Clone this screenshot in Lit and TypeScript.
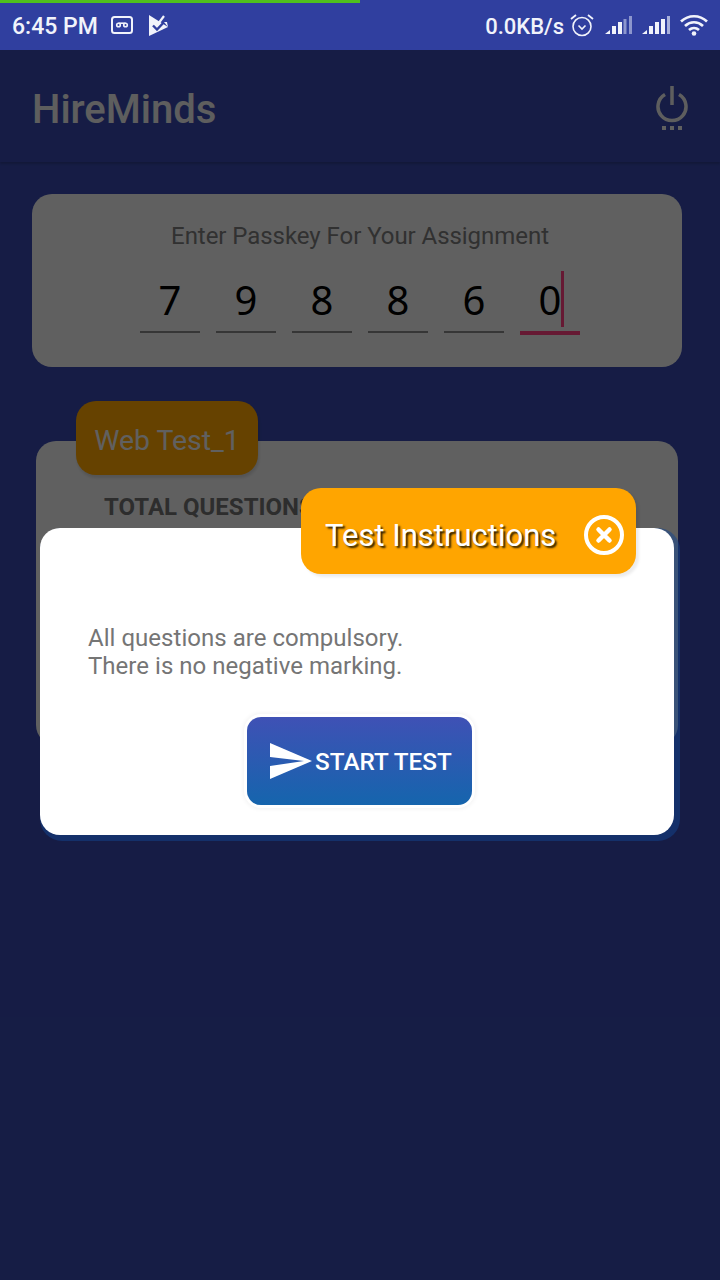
import { LitElement, html, css } from "lit";
import { customElement } from "lit/decorators.js";

const passkey = ["7", "9", "8", "8", "6", "0"];

@customElement("app-root")
export class AppRoot extends LitElement {
  static styles = css`
    :host {
      display: block;
      position: relative;
      height: 1280px;
      overflow: hidden;
      background: #3748ac;
      font-family: Roboto, "Noto Sans", sans-serif;
    }

    .status {
      position: relative;
      z-index: 3;
      height: 50px;
      background: #303f9f;
      color: #f1f3fb;
    }
    .progress {
      width: 360px;
      height: 3px;
      background: #4fc01c;
    }
    .status-row {
      display: flex;
      align-items: center;
      height: 47px;
      padding: 0 12px 3px 12px;
      box-sizing: border-box;
      font-size: 23px;
      font-weight: 500;
    }
    .status-row svg {
      display: block;
      flex: none;
    }
    .time {
      width: 86px;
      padding-top: 2px;
      white-space: nowrap;
    }
    .tape {
      margin-left: 13px;
    }
    .flag {
      margin-left: 16px;
    }
    .speed {
      margin-left: auto;
      padding-top: 2px;
      font-size: 22px;
      white-space: nowrap;
    }
    .alarm {
      margin-left: 6px;
    }
    .sig {
      margin-left: 11px;
    }
    .sig + .sig {
      margin-left: 10px;
    }
    .wifi {
      margin-left: 10px;
    }

    .appbar {
      display: flex;
      align-items: center;
      justify-content: space-between;
      height: 112px;
      padding: 6px 32px 0;
      box-sizing: border-box;
      background: #3748ac;
      box-shadow: 0 2px 2px rgba(0, 0, 0, 0.18);
    }
    .brand {
      font-size: 40px;
      font-weight: 500;
      color: #ececec;
    }

    .main {
      padding: 32px 38px 0 32px;
    }
    .pass-card {
      height: 173px;
      box-sizing: border-box;
      padding: 28px 0 0 6px;
      border-radius: 20px;
      background: #f0f0f0;
      text-align: center;
    }
    .pass-title {
      font-size: 24px;
      line-height: 28px;
      letter-spacing: -0.05px;
      color: #7a7a7a;
    }
    .digits {
      display: flex;
      justify-content: center;
      gap: 16px;
      margin-top: 19px;
    }
    .digit {
      position: relative;
      width: 60px;
      height: 62px;
      border-bottom: 2px solid #888;
      font-family: "Noto Sans", sans-serif;
      font-size: 40px;
      line-height: 62px;
      text-align: center;
      color: #000;
    }
    .digit.active {
      border-bottom: 4px solid #ff4081;
    }
    .caret {
      position: absolute;
      left: 41px;
      top: 2px;
      width: 3px;
      height: 56px;
      background: #ff4081;
    }

    .test {
      margin: 34px 0 0 4px;
      width: 642px;
    }
    .test-tag {
      position: relative;
      display: flex;
      align-items: center;
      justify-content: center;
      width: 182px;
      height: 74px;
      margin: 0 0 -34px 40px;
      padding-top: 5px;
      box-sizing: border-box;
      border-radius: 20px;
      background: #ffa500;
      box-shadow: 1px 3px 3px rgba(0, 0, 0, 0.12);
      font-size: 28.4px;
      color: #f0f0f0;
    }
    .test-card {
      height: 304px;
      box-sizing: border-box;
      padding: 52px 68px 0;
      border-radius: 20px;
      background: #f0f0f0;
      font-size: 24px;
      font-weight: 700;
      color: #707070;
    }

    .scrim {
      position: absolute;
      inset: 0;
      z-index: 1;
      background: rgba(0, 0, 0, 0.6);
    }

    .dialog {
      position: absolute;
      z-index: 2;
      left: 40px;
      top: 528px;
      width: 640px;
      height: 313px;
      border-radius: 22px;
      background: rgba(18, 67, 143, 0.5);
    }
    .dialog-body {
      width: 634px;
      height: 307px;
      box-sizing: border-box;
      padding: 96px 48px 0;
      border-radius: 20px;
      background: #fff;
    }
    .dialog-head {
      position: absolute;
      left: 261px;
      top: -40px;
      display: flex;
      align-items: center;
      justify-content: space-between;
      width: 335px;
      height: 86px;
      padding: 8px 12px 0 24px;
      box-sizing: border-box;
      border-radius: 20px;
      background: #ffa500;
      box-shadow: 3px 3px 3px rgba(0, 0, 0, 0.08);
      font-size: 31px;
      color: #fff;
      text-shadow: 2px 2px 2px #2e2000;
    }
    .dialog-text {
      font-size: 24px;
      line-height: 28px;
      letter-spacing: 0.03px;
      color: #757575;
    }
    .start {
      display: flex;
      align-items: center;
      gap: 3px;
      width: 225px;
      height: 88px;
      margin: 37px 0 0 159px;
      padding: 0 0 0 23px;
      box-sizing: border-box;
      border: none;
      border-radius: 14px;
      background: linear-gradient(#3f51b5, #1565ad);
      box-shadow: 0 0 0 3px #fff, 0 0 4px 4px rgba(0, 0, 0, 0.05);
      color: #fff;
      font-family: inherit;
      font-size: 24.3px;
      font-weight: 500;
    }
  `;

  render() {
    return html`
      <div class="status">
        <div class="progress"></div>
        <div class="status-row">
          <span class="time">6:45 PM</span>
          <svg class="tape" width="22" height="18" viewBox="0 0 22 18">
            <rect x="1" y="1" width="20" height="16" rx="2.500" fill="none" stroke="#f1f3fb" stroke-width="2" />
            <circle cx="7.500" cy="9" r="1.800" fill="none" stroke="#f1f3fb" stroke-width="1.600" />
            <circle cx="14.500" cy="9" r="1.800" fill="none" stroke="#f1f3fb" stroke-width="1.600" />
            <path d="M7.500 7.200h7" stroke="#f1f3fb" stroke-width="1.600" />
          </svg>
          <svg class="flag" width="20" height="21" viewBox="0 0 20 21">
            <path d="M0 0L19 12 0 21z" fill="#f1f3fb" />
            <path d="M4 10.500l4 4L18 4" fill="none" stroke="#303f9f" stroke-width="2.400" />
            <path d="M6 6l3 3 6-8" fill="none" stroke="#f1f3fb" stroke-width="2.200" />
            <path d="M19 12l-4-5 3 0z" fill="#f1f3fb" />
          </svg>
          <span class="speed">0.0KB/s</span>
          <svg class="alarm" width="24" height="24" viewBox="0 0 24 24">
            <circle cx="12" cy="13.500" r="9" fill="none" stroke="#f1f3fb" stroke-width="1.600" />
            <path d="M8.500 12.500l3.500 3.500 3.500-3.500" fill="none" stroke="#f1f3fb" stroke-width="1.600" />
            <path d="M1 6l5-4M23 6l-5-4" stroke="#f1f3fb" stroke-width="1.800" />
          </svg>
          <svg class="sig" width="27" height="20" viewBox="0 0 27 20">
            <path d="M0 19l5-4v4zM7 11h4v8H7zM13 7h4v12h-4z" fill="#f1f3fb" />
            <path d="M18.500 4h3v15h-3zM24 1h3v18h-3z" fill="#8c96cd" />
          </svg>
          <svg class="sig" width="28" height="20" viewBox="0 0 28 20">
            <path d="M0 19l5-4v4zM7 11h4v8H7zM13 7h4v12h-4zM19 4h4v15h-4z" fill="#f1f3fb" />
            <path d="M25 1h3v18h-3z" fill="#a9b1db" />
          </svg>
          <svg class="wifi" width="28" height="22" viewBox="0 0 28 22">
            <g fill="none" stroke="#f1f3fb" stroke-width="2.700">
              <path d="M1 7.500C8.500 .5 19.500 .5 27 7.500" />
              <path d="M5 12c5.500-5 12.500-5 18 0" />
              <path d="M9 16c3-2.700 7-2.700 10 0" />
            </g>
            <circle cx="14" cy="19.500" r="2.300" fill="#f1f3fb" />
          </svg>
        </div>
      </div>

      <header class="appbar">
        <span class="brand">HireMinds</span>
        <svg width="32" height="46" viewBox="0 0 32 46">
          <path d="M9 8.500a14 14 0 1 0 14 0" fill="none" stroke="#ececec" stroke-width="3.500" />
          <path d="M16 0v19" stroke="#ececec" stroke-width="3.500" />
          <path d="M6 40h4v4H6zM14 40h4v4h-4zM22 40h4v4h-4z" fill="#f0f0f0" />
        </svg>
      </header>

      <main class="main">
        <section class="pass-card">
          <div class="pass-title">Enter Passkey For Your Assignment</div>
          <div class="digits">
            ${passkey.map(
              (d, i) => html`
                <div class="digit ${i === passkey.length - 1 ? "active" : ""}">
                  ${d}${i === passkey.length - 1 ? html`<span class="caret"></span>` : ""}
                </div>
              `
            )}
          </div>
        </section>

        <section class="test">
          <div class="test-tag">Web Test_1</div>
          <div class="test-card">TOTAL QUESTIONS</div>
        </section>
      </main>

      <div class="scrim"></div>

      <div class="dialog">
        <div class="dialog-body">
          <div class="dialog-text">All questions are compulsory.<br />There is no negative marking.</div>
          <button class="start">
            <svg width="42" height="36" viewBox="0 0 42 36">
              <path d="M0 0L42 18 0 36V23L34 18 0 14z" fill="#fff" />
            </svg>
            <span>START TEST</span>
          </button>
        </div>
        <div class="dialog-head">
          <span>Test Instructions</span>
          <svg width="40" height="40" viewBox="0 0 40 40">
            <circle cx="20" cy="20" r="18" fill="none" stroke="#fff" stroke-width="4" />
            <path d="M14.500 14.500l11 11M25.500 14.500l-11 11" stroke="#fff" stroke-width="4.500" stroke-linecap="round" />
          </svg>
        </div>
      </div>
    `;
  }
}
